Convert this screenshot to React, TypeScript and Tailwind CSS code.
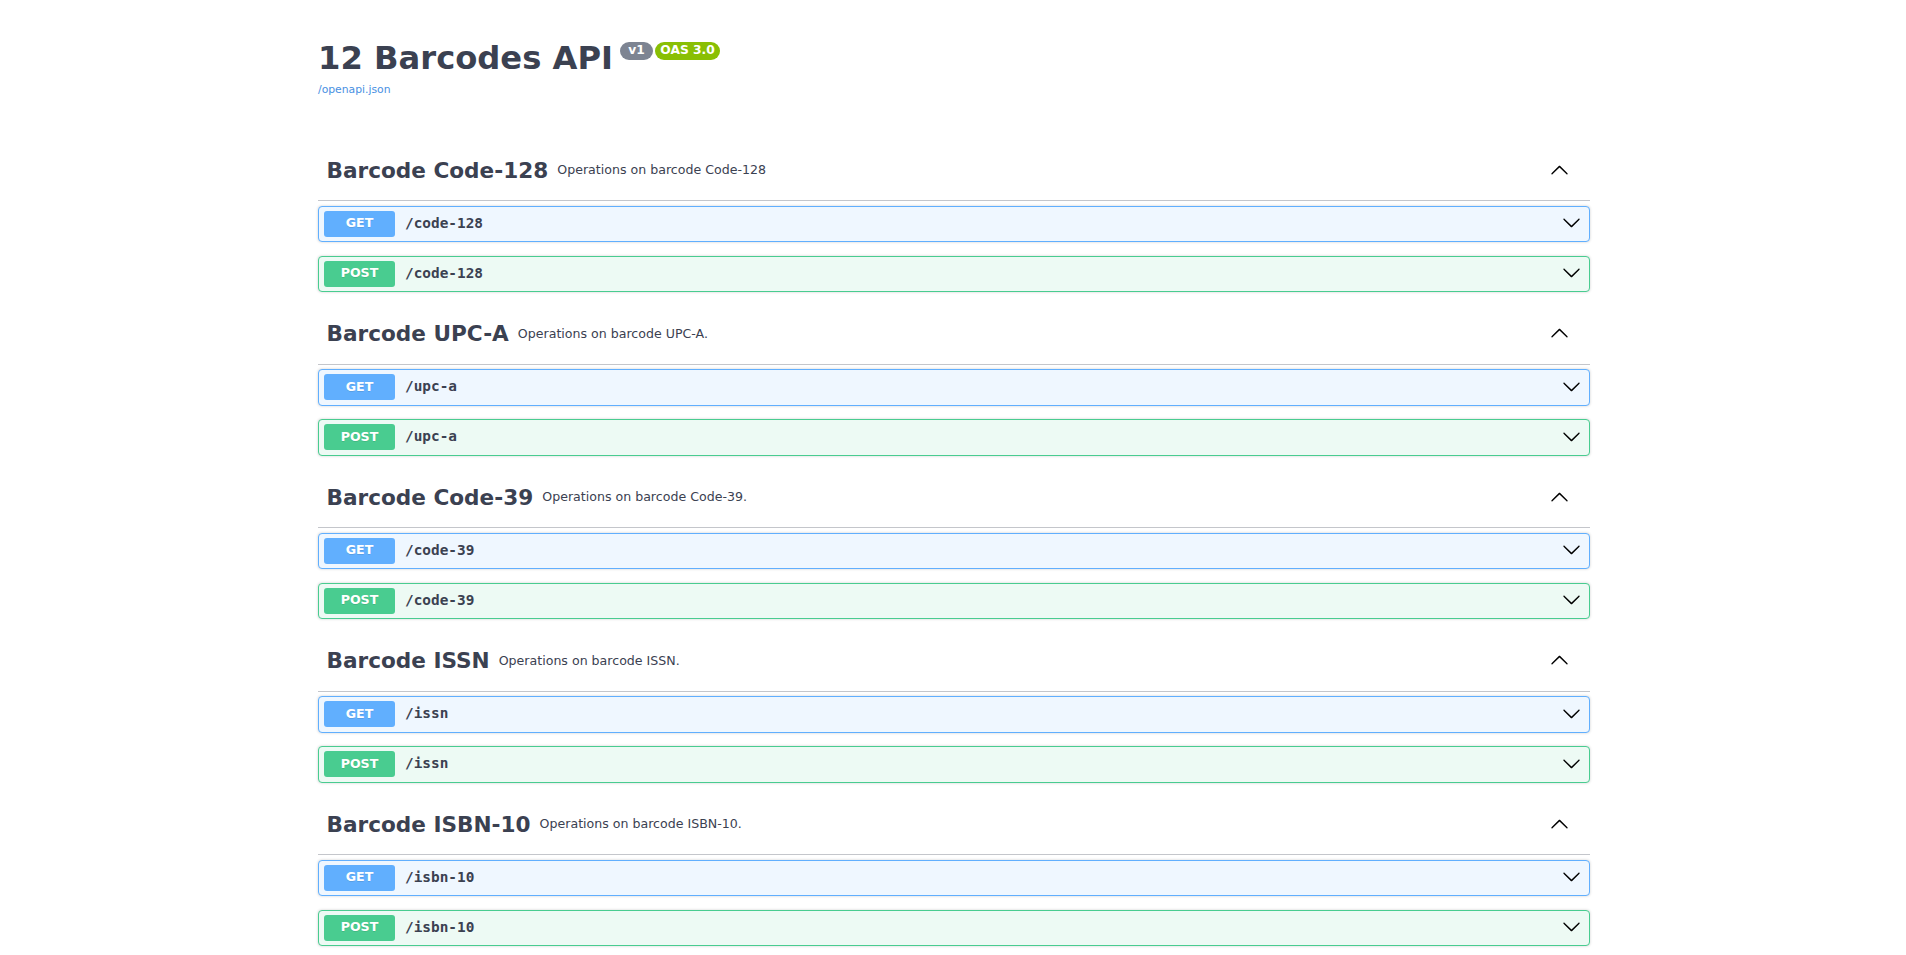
import React from "react";

type Op = { method: "GET" | "POST"; path: string };
type Tag = { name: string; desc: string; ops: Op[] };

const tags: Tag[] = [
  { name: "Barcode Code-128", desc: "Operations on barcode Code-128", ops: [] },
  { name: "Barcode UPC-A", desc: "Operations on barcode UPC-A.", ops: [] },
  { name: "Barcode Code-39", desc: "Operations on barcode Code-39.", ops: [] },
  { name: "Barcode ISSN", desc: "Operations on barcode ISSN.", ops: [] },
  { name: "Barcode ISBN-10", desc: "Operations on barcode ISBN-10.", ops: [] },
];
const paths = ["/code-128", "/upc-a", "/code-39", "/issn", "/isbn-10"];
tags.forEach((t, i) => {
  t.ops = [
    { method: "GET", path: paths[i] },
    { method: "POST", path: paths[i] },
  ];
});

function Arrow({ up }: { up?: boolean }) {
  return (
    <svg
      width="19"
      height="19"
      viewBox="0 0 20 20"
      className={up ? "rotate-180 shrink-0" : "shrink-0"}
      aria-hidden="true"
    >
      <path
        fill="#000"
        d="M17.418 6.109c.272-.268.709-.268.979 0s.271.701 0 .969l-7.908 7.83c-.27.268-.707.268-.979 0l-7.908-7.83c-.27-.268-.27-.701 0-.969.271-.268.709-.268.979 0L10 13.25l7.418-7.141z"
      />
    </svg>
  );
}

function OpBlock({ op }: { op: Op }) {
  const get = op.method === "GET";
  return (
    <div
      className={
        get
          ? "flex h-[36.5px] items-center rounded-[4px] border border-[#61affe] bg-[#eff7ff] pl-[5px] pr-[8px] shadow-[0_0_3px_rgba(0,0,0,0.19)]"
          : "flex h-[36.5px] items-center rounded-[4px] border border-[#49cc90] bg-[#edfaf4] pl-[5px] pr-[8px] shadow-[0_0_3px_rgba(0,0,0,0.19)]"
      }
    >
      <span
        className={
          get
            ? "flex h-[26px] w-[71px] items-center justify-center rounded-[3px] bg-[#61affe] text-[12.6px] font-bold text-white [text-shadow:0_1px_0_rgba(0,0,0,0.1)]"
            : "flex h-[26px] w-[71px] items-center justify-center rounded-[3px] bg-[#49cc90] text-[12.6px] font-bold text-white [text-shadow:0_1px_0_rgba(0,0,0,0.1)]"
        }
      >
        {op.method}
      </span>
      <span className="ml-[10px] flex-1 font-['DejaVu_Sans_Mono',monospace] text-[14.4px] font-bold text-[#3b4151]">
        {op.path}
      </span>
      <span className="-mt-[2px]">
        <Arrow />
      </span>
    </div>
  );
}

function TagSection({ tag }: { tag: Tag }) {
  return (
    <div className="mb-[11.5px]">
      <div className="flex h-[61px] items-center border-b border-[#c4c6cb] pl-[8.5px] pr-[21.5px]">
        <h3 className="text-[21.6px] font-bold leading-[25px] text-[#3b4151]">{tag.name}</h3>
        <span className="ml-[9px] flex-1 pt-[1px] text-[12.6px] text-[#3b4151]">{tag.desc}</span>
        <Arrow up />
      </div>
      <div className="mt-[4.5px] flex flex-col gap-[13.5px]">
        {tag.ops.map((op) => (
          <OpBlock key={op.method + op.path} op={op} />
        ))}
      </div>
    </div>
  );
}

export default function App() {
  return (
    <div className="min-h-screen bg-white pl-[2px] font-['DejaVu_Sans',sans-serif] text-[#3b4151]">
      <div className="mx-auto w-[1272px]">
        <div className="h-[140px] pt-[40px]">
          <div className="flex items-start">
            <h2 className="text-[32.2px] font-bold leading-[37px] text-[#3b4151]">12 Barcodes API</h2>
            <div className="ml-[7px] mt-[1.5px] flex gap-[2px]">
              <span className="flex h-[18px] w-[33px] items-center justify-center rounded-full bg-[#7d8492] text-[12.25px] font-bold leading-none text-white">
                v1
              </span>
              <span className="flex h-[18px] w-[65px] items-center justify-center rounded-full bg-[#89bf04] text-[12.25px] font-bold leading-none text-white">
                OAS 3.0
              </span>
            </div>
          </div>
          <a
            href="#"
            className="mt-[5.5px] block text-[10.8px] leading-[13px] text-[#4990e2]"
          >
            /openapi.json
          </a>
        </div>
        {tags.map((t) => (
          <TagSection key={t.name} tag={t} />
        ))}
      </div>
    </div>
  );
}
